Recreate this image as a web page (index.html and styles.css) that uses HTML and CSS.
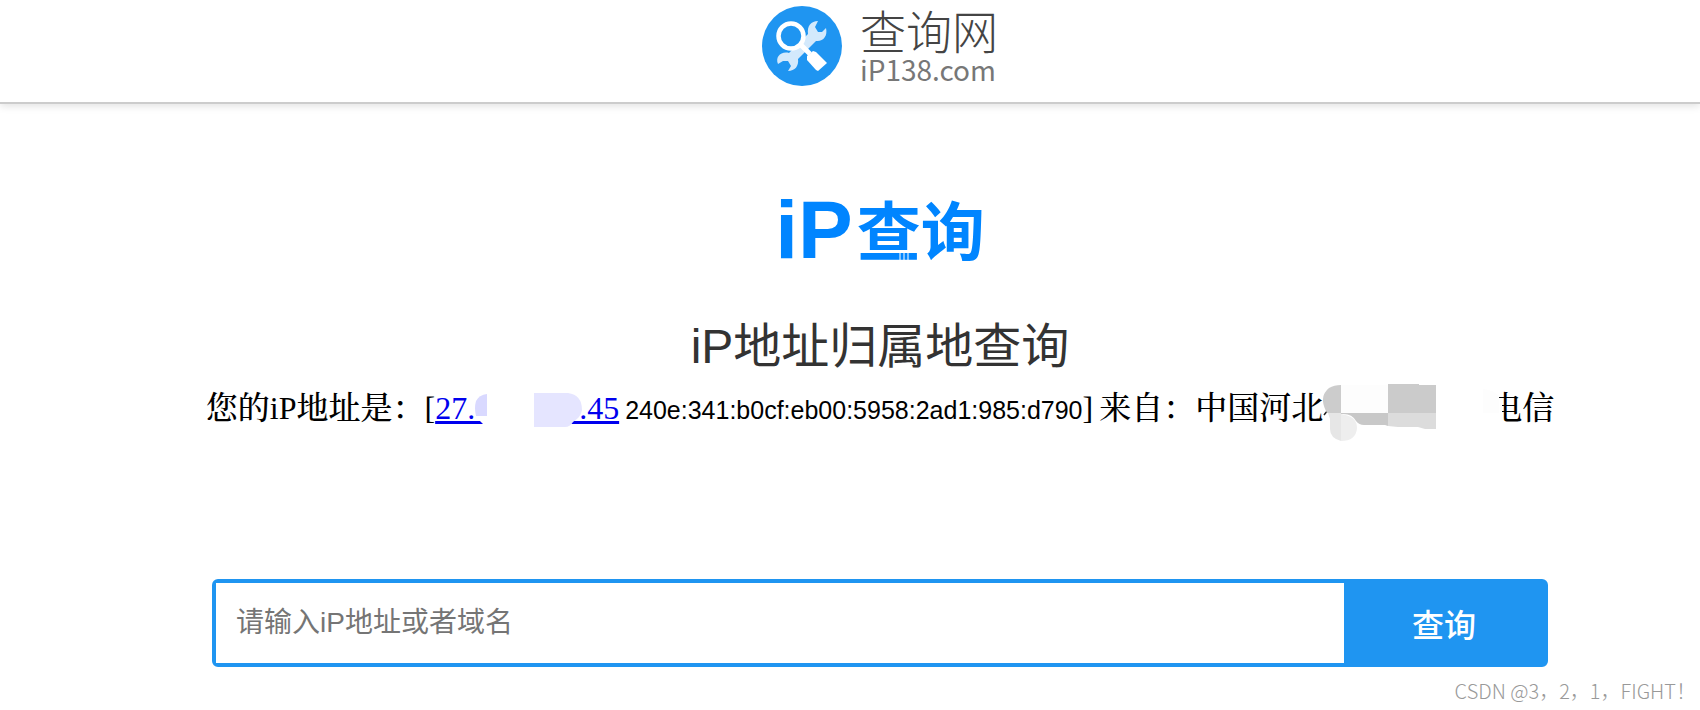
FILE: index.html
```html
<!DOCTYPE html>
<html lang="zh-CN">
<head>
<meta charset="utf-8">
<title>iP查询</title>
<link rel="stylesheet" href="styles.css">
</head>
<body>
<header class="header">
  <a class="brand" href="#">
    <svg class="brand-icon" viewBox="0 0 80 80" aria-hidden="true">
      <circle cx="40" cy="40" r="40" fill="#1f95f1"/>
      <path d="M27 47 L46 28 C45 20 49 15 56 15 L53 21 L56 26 L60 26 L64 22 C66 30 61 36 54 35 L36 53 C37 60 33 65 26 65 L29 60 L26 55 L21 55 L16 58 C13 51 19 45 27 47 Z" fill="#d3e9fc"/>
      <circle cx="29" cy="30" r="12.5" fill="#1f95f1" stroke="#fff" stroke-width="4.5"/>
      <path d="M38 38 L48 48" stroke="#fff" stroke-width="5"/>
      <path d="M45 50 L51 45 L54 46 L65 57 L56 65 L54 64 L45 54 Z" fill="#fff"/>
    </svg>
    <span class="brand-text">
      <span class="brand-name">查询网</span>
      <span class="brand-domain">iP138.com</span>
    </span>
  </a>
</header>
<main class="main">
  <div class="logo"><span class="logo-latin">iP</span><span class="logo-han">查询<svg class="logo-cuts" viewBox="0 0 12 10" aria-hidden="true"><path d="M1 0V10M5 0V10M9 0V10" stroke="#fff" stroke-width="1"/></svg></span></div>
  <h1 class="title">iP地址归属地查询</h1>
  <p class="result">
    <span>您的iP地址是：[<a class="ip" href="#">27.&nbsp;&nbsp;&nbsp;&nbsp;&nbsp;&nbsp;&nbsp;&nbsp;&nbsp;&nbsp;&nbsp;&nbsp;&nbsp;.45<svg class="ip-mask" viewBox="0 0 110 40" aria-hidden="true">
      <path d="M1 25 H12 V4 H59 V38 H14 Q7 34 3 29 Z" fill="#fff"/>
      <path d="M12 4 V26 H1 Q-1 18 1 11 Q4 5 12 4 Z" fill="#d9d9ff"/>
      <path d="M59 3 H93 Q107 5 107 20 Q106 27 98 32 Q95 37 90 37 H59 Z" fill="#e5e5ff"/>
    </svg></a></span>
    <span class="ipv6">240e:341:b0cf:eb00:5958:2ad1:985:d790</span><span class="bracket">]</span>
    <span class="place">来自：中国河北<span class="place-hidden"><svg class="place-mask" viewBox="0 0 180 60" aria-hidden="true">
      <path d="M160 6 Q174 8 179 20 V46 H160 Z" fill="#fff"/>
      <path d="M160 6 Q172 7 176 14 V30 H160 Z" fill="#fdfdfd"/>
      <path d="M1 32 L5 27 M2 12 L4 11" stroke="#222" stroke-width="1.5"/>
      <path d="M18 2 V30 H4 Q-5 14 6 5 Q11 2 18 2 Z" fill="#ccc"/>
      <path d="M18 2 H65 V30 H18 Z" fill="#fdfdfd"/>
      <path d="M65 1 H96 V2 H113 V30 H65 Z" fill="#cbcbcb"/>
      <path d="M18 30 H65 V43 L62 42 H41 Q36 42 33 38 Q29 30 18 31 Z" fill="#c8c8c8"/>
      <path d="M65 30 H113 V46 H102 L95 44 H75 L65 43 Z" fill="#dcdcdc"/>
      <path d="M5 30 H18 V58 Q7 55 7 46 V36 Z" fill="#e6e6e6"/>
      <path d="M18 31 Q34 33 34 45 Q33 58 18 58 Z" fill="#eee"/>
    </svg></span>电信</span>
  </p>
  <form class="search" onsubmit="return false">
    <input class="search-input" type="text" aria-label="iP地址或者域名" placeholder="请输入iP地址或者域名">
    <button class="search-button" type="submit">查询</button>
  </form>
</main>
<div class="watermark">CSDN @3，2，1，FIGHT！</div>
</body>
</html>
```
FILE: styles.css
```css
* { box-sizing: border-box; }
body {
  margin: 0;
  position: relative;
  min-height: 100vh;
  background: #fff;
  color: #000;
  font-family: "Liberation Sans", "Noto Sans CJK SC", sans-serif;
}
.header {
  display: flex;
  justify-content: center;
  height: 104px;
  padding: 6px 0 0 60px;
  border-bottom: 2px solid #ccc;
  box-shadow: 0 2px 8px rgba(0, 0, 0, 0.12);
}
.brand {
  display: flex;
  gap: 18px;
  color: #444;
  text-decoration: none;
}
.brand-icon { width: 80px; height: 80px; }
.brand-text {
  display: flex;
  flex-direction: column;
}
.brand-name {
  font-family: "Liberation Sans", "Noto Sans CJK SC", sans-serif;
  font-size: 46px;
  font-weight: 300;
  line-height: 54px;
}
.brand-domain {
  color: #777;
  font-family: "Noto Sans CJK SC", sans-serif;
  font-size: 28px;
  line-height: 18px;
}
.main {
  display: flex;
  flex-direction: column;
  align-items: center;
  padding: 84px 0 30px 60px;
}
.logo {
  display: flex;
  align-items: center;
  gap: 4px;
  color: #0085ff;
  font-weight: 700;
  line-height: 84px;
}
.logo-latin { font-size: 82px; }
.logo-han {
  position: relative;
  font-family: "Noto Sans CJK SC", sans-serif;
  font-size: 64px;
  line-height: 78px;
  padding-bottom: 6px;
}
.logo-cuts { position: absolute; left: 42px; bottom: 12px; width: 12px; height: 10px; }
.title {
  margin: 40px 0 0;
  color: #333;
  font-size: 48px;
  font-weight: 400;
  line-height: 70px;
}
.result {
  display: flex;
  align-items: baseline;
  margin: 0;
  font-family: "Liberation Serif", "Noto Serif CJK SC", "Noto Sans CJK SC", serif;
  font-size: 32px;
  font-weight: 500;
  line-height: 52px;
  white-space: nowrap;
}
.ip {
  position: relative;
  color: #00e;
  text-decoration-thickness: 3px;
  text-underline-offset: 2px;
}
.ip-mask { position: absolute; left: 40px; top: 0; width: 110px; height: 40px; }
.ipv6 { margin-left: 6px; font-family: "Liberation Sans", sans-serif; font-size: 25px; }
.place { margin-left: 6px; }
.place-hidden { position: relative; display: inline-block; width: 167px; }
.place-mask { position: absolute; left: 0; bottom: -24px; width: 180px; height: 60px; }
.search {
  display: flex;
  width: 100%;
  max-width: 1336px;
  height: 88px;
  margin-top: 143px;
  border: 4px solid #1f95f1;
  border-radius: 6px;
  background: #1f95f1;
}
.search-input {
  flex: 1;
  min-width: 0;
  padding: 0 20px;
  border: 0;
  border-radius: 0;
  background: #fff;
  font-family: inherit;
  font-size: 28px;
}
.search-input::placeholder { color: #757575; }
.search-button {
  width: 200px;
  padding: 0;
  border: 0;
  background: #1f95f1;
  color: #fff;
  font-family: inherit;
  font-size: 32px;
  font-weight: 500;
}
.watermark {
  position: absolute;
  right: 4px;
  bottom: 4px;
  color: #999;
  font-family: "Noto Sans CJK SC", sans-serif;
  font-size: 20px;
  font-weight: 300;
  line-height: 30px;
}
```
